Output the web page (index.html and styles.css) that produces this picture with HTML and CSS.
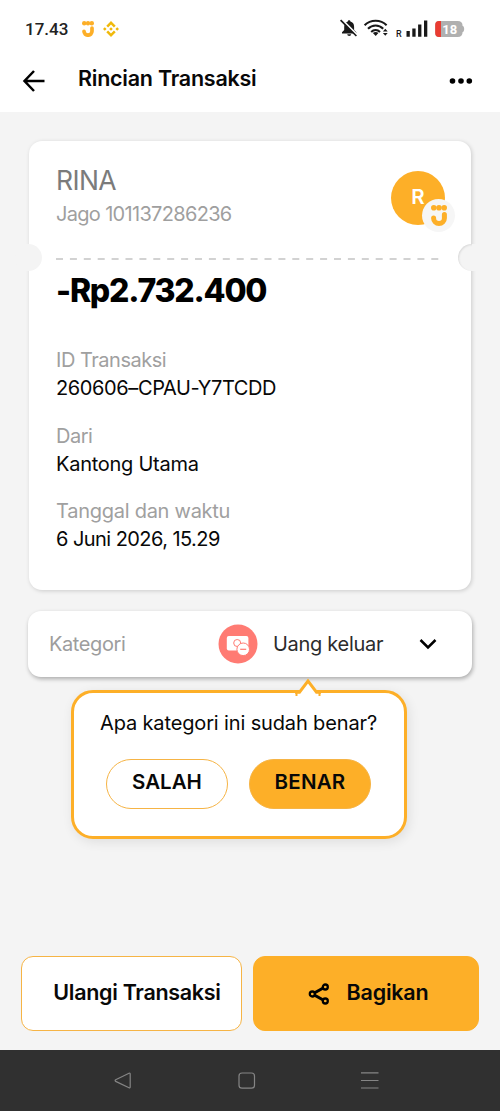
FILE: index.html
```html
<!DOCTYPE html>
<html lang="id">
<head>
<meta charset="utf-8">
<title>Rincian Transaksi</title>
<link rel="stylesheet" href="styles.css">
</head>
<body>
<div class="screen">
  <header class="top">
    <div class="status">
      <span class="clock">17.43</span>
      <svg class="st-jago" width="12" height="16" viewBox="0 0 12 16" fill="#fdaf28"><circle cx="2.200" cy="2.200" r="2.200"/><circle cx="6" cy="2.200" r="2.200"/><circle cx="9.800" cy="2.200" r="2.200"/><path d="M10 7v3.300a4 3.900 0 0 1-8 0" fill="none" stroke="#fdaf28" stroke-width="3.700" stroke-linecap="round"/></svg>
      <svg class="st-coin" width="16" height="16" viewBox="0 0 16 16" fill="#f0b90b"><path d="M8 0l4.700 4.700-1.800 1.800L8 3.600 5.100 6.500 3.300 4.700zM8 16l4.700-4.700-1.800-1.800L8 12.400 5.100 9.500l-1.800 1.800zM1.800 6.200L3.600 8 1.800 9.800 0 8zM14.200 6.200L16 8l-1.800 1.800L12.400 8zM8 6.200L9.800 8 8 9.800 6.200 8z"/></svg>
      <svg class="st-right" width="126" height="20" viewBox="0 0 126 20" fill="#191919">
        <path d="M2 14.500V13.300l2.200-2.300V7.800c0-2.800 1.600-4.700 3.600-5.300C7.800.9 10.400.9 10.400 2.500c2.400.6 3.700 2.500 3.700 5.300V11l2.200 2.300v1.200zM7.200 15.300h4a2 1.700 0 0 1-4 0z"/>
        <path d="M1.500.2L17.700 16.500" stroke="#fff" stroke-width="2"/><path d="M.6 1.200L16.400 17" stroke="#191919" stroke-width="1.700"/>
        <g fill="none" stroke="#191919" stroke-width="2.100"><path d="M24.600 6.300c6-6 16-6 22 0M28 9.700c4.300-4.300 10.900-4.300 15.200 0M31.200 12.900c2.500-2.500 6.300-2.500 8.800 0"/></g>
        <path d="M32.900 14c1.500-1.500 4-1.500 5.500 0l-2.700 2.900zM42.900 12.500l2.400-2.700 2.400 2.700zM42.900 14h4.800l-2.400 2.700z"/>
        <text class="roam" x="56" y="17.500">R</text>
        <path d="M66.500 11.900h3.300v5.900h-3.300zM72.300 9.600h3.300v8.200h-3.300zM78.100 5.400h3.300v12.400h-3.300zM84 1.400h3.300v16.400h-3.300z"/>
        <path d="M99 2h18.600q5 0 5 5h.6q2 3 0 6h-.6q0 5-5 5H99q-3.800 0-3.800-4V6q0-4 3.800-4z" fill="#b0b0b0"/><path d="M101 2h-2q-3.800 0-3.800 4v8q0 4 3.800 4h2z" fill="#ea3c32"/>
        <text class="batt" x="102.300" y="14.900">18</text>
      </svg>
    </div>
    <div class="appbar">
      <svg class="back" width="24" height="24" viewBox="0 0 24 24" fill="none" stroke="#000" stroke-width="2.500"><path d="M22.500 12H3M12 2L2.500 12 12 22"/></svg>
      <h1 class="title">Rincian Transaksi</h1>
      <svg class="more" width="24" height="6" viewBox="0 0 24 6"><circle cx="3.500" cy="3" r="2.800"/><circle cx="12" cy="3" r="2.800"/><circle cx="20.300" cy="3" r="2.800"/></svg>
    </div>
  </header>
  <main class="content">
    <section class="card">
      <i class="notch notch-l"></i><i class="notch notch-r"></i>
      <div class="payee">
        <div>
          <div class="name">RINA</div>
          <div class="acct">Jago 101137286236</div>
        </div>
        <div class="avatar">R<span class="badge"><svg width="16" height="21" viewBox="0 0 16 21" fill="#fdaf28"><circle cx="2.800" cy="2.800" r="2.800"/><circle cx="8" cy="2.800" r="2.800"/><circle cx="13.200" cy="2.800" r="2.800"/><path d="M13.400 9.500v3.700a5.400 5.200 0 0 1-10.800 0v-.1" fill="none" stroke="#fdaf28" stroke-width="5" stroke-linecap="round"/></svg></span></div>
      </div>
      <svg class="dash" width="384" height="2" viewBox="0 0 384 2"><path d="M0 1h384" stroke="#d2d2d2" stroke-width="2" stroke-dasharray="7 6.900"/></svg>
      <div class="amount">-Rp2.732.400</div>
      <dl class="rows">
        <dt class="k-id">ID Transaksi</dt><dd class="v-id">260606–CPAU-Y7TCDD</dd>
        <dt class="k-from">Dari</dt><dd class="v-from">Kantong Utama</dd>
        <dt class="k-date">Tanggal dan waktu</dt><dd class="v-date">6 Juni 2026, 15.29</dd>
      </dl>
    </section>
    <section class="category">
      <span class="cat-label">Kategori</span>
      <svg class="cat-icon" width="40" height="40" viewBox="0 0 40 40"><circle cx="20" cy="20" r="19.500" fill="#ff7b73"/><rect x="8.800" y="12" width="21.600" height="14.500" rx="2" fill="#fff"/><circle cx="19.200" cy="19" r="3.500" fill="#fff" stroke="#ff7b73"/><circle cx="25.200" cy="25.300" r="6.300" fill="#fff" stroke="#ff7b73"/><path d="M22.200 25.300h6" stroke="#ff7b73" stroke-width="1.200"/></svg>
      <span class="cat-value">Uang keluar</span>
      <svg class="chev" width="18" height="12" viewBox="0 0 18 12" fill="none" stroke="#000" stroke-width="2.500"><path d="M1.500 2L9 9.500 16.500 2"/></svg>
    </section>
    <section class="tip">
      <svg class="arrow" width="28" height="19" viewBox="0 0 28 19"><path d="M3 18v-4h3L14 3l8 11h3v4z" fill="#fff"/><path d="M1 14.200H5.500L14 3l8.500 11.200H27" fill="none" stroke="#fdaf28" stroke-width="2.900"/><path d="M1.500 15H3.500v3h-2zM24.500 15h2v3h-2z" fill="#fdaf28"/></svg>
      <p class="ask">Apa kategori ini sudah benar?</p>
      <div class="choices">
        <button class="pill">SALAH</button>
        <button class="pill solid">BENAR</button>
      </div>
    </section>
  </main>
  <footer class="actions">
    <button class="btn">Ulangi Transaksi</button>
    <button class="btn primary"><svg width="22" height="22" viewBox="0 0 22 22" fill="none" stroke="#000"><path d="M17 4L4.500 11 17 18" stroke-width="3"/><g fill="#fdaf28" stroke-width="2.300"><circle cx="17.300" cy="4" r="2.500"/><circle cx="4.300" cy="11" r="2.500"/><circle cx="17.300" cy="18" r="2.500"/></g></svg><span class="share">Bagikan</span></button>
  </footer>
  <nav class="nav">
    <svg width="500" height="61" viewBox="0 0 500 61" fill="none" stroke="#858585" stroke-width="1.200"><path d="M129 23.300q1.200-.6 1.200.8v12.800q0 1.400-1.200.8l-13.300-6.300q-1.200-.8 0-1.600z"/><rect x="239" y="23" width="15.500" height="15.200" rx="3"/><path d="M361 22.800h17.500M361 30.500h17.500M361 38h17.500"/></svg>
  </nav>
</div>
</body>
</html>
```
FILE: styles.css
```css
* { box-sizing: border-box; }
body { margin: 0; background: #f4f4f4; font-family: Inter, "Liberation Sans", sans-serif; color: #080808; }
h1, p, dl, dd { margin: 0; }
button { font: inherit; color: inherit; padding: 0; white-space: nowrap; }
.screen { width: 500px; height: 1111px; display: flex; flex-direction: column; overflow: hidden; }
.top { height: 112px; background: #fff; }
.status { height: 58px; display: flex; align-items: center; padding-left: 25px; }
.clock { width: 57px; font: 500 17px/20px Roboto, sans-serif; color: #222; }
.st-coin { margin-left: 9px; }
.st-right { margin-left: 221px; }
.roam { font: 500 9px Roboto, sans-serif; }
.batt { font: 700 13px Roboto, sans-serif; fill: #fff; }
.appbar { display: flex; align-items: center; height: 40px; padding-left: 22px; }
.title { width: 371px; margin-left: 32px; font-size: 21.5px; font-weight: 600; line-height: 39px; letter-spacing: -0.24px; }
.back { margin-top: 5px; }
.more { margin-top: 6px; }
.content { flex: 1; padding-top: 29px; }
.card { position: relative; width: 442px; height: 449px; margin-left: 29px; padding: 23px 27px 0; background: #fff; border-radius: 13px; box-shadow: 1px 1px 4px rgba(0,0,0,.17); white-space: nowrap; }
.notch { position: absolute; top: 103px; width: 27px; height: 27px; border-radius: 50%; background: #f4f4f4; }
.notch-l { left: -14px; }
.notch-r { right: -14px; box-shadow: inset 1px 1px 2px rgba(0,0,0,.1); }
.notch-r::after { content: ""; position: absolute; left: 14px; top: 0; width: 14px; height: 27px; background: #f4f4f4; }
.payee { display: flex; justify-content: space-between; height: 94px; }
.name { font-size: 26.5px; line-height: 33px; letter-spacing: -0.6px; color: #7b7b7b; }
.acct { font-size: 20px; line-height: 34px; letter-spacing: -0.68px; color: #9f9f9f; }
.avatar { position: relative; left: 1px; width: 54px; height: 54px; margin-top: 7px; border-radius: 50%; background: #fdaf28; color: #fff; font-size: 20.5px; font-weight: 600; line-height: 51px; text-align: center; }
.badge { position: absolute; left: 31px; top: 28px; width: 33px; height: 33px; border-radius: 50%; background: #f6f6f6; display: flex; align-items: center; justify-content: center; }
.dash { display: block; }
.amount { margin-top: 10px; font-size: 32px; font-weight: 800; line-height: 42px; letter-spacing: -1.2px; color: #000; }
.rows { margin-top: 34px; font-size: 20px; }
.rows dt { line-height: 28px; color: #a0a0a0; }
.rows dd { line-height: 28px; margin-bottom: 19.5px; }
.k-id { letter-spacing: -0.48px; }
.v-id { letter-spacing: -0.39px; }
.k-from { letter-spacing: -0.5px; }
.v-from { letter-spacing: -0.26px; }
.k-date { letter-spacing: -0.26px; }
.v-date { letter-spacing: -0.56px; }
.category { display: flex; align-items: center; width: 444px; height: 66px; margin: 21px 0 0 28px; padding-left: 21px; background: #fff; border-radius: 13px; box-shadow: 1px 2px 4px rgba(0,0,0,.3); font-size: 20px; white-space: nowrap; }
.cat-label { width: 169px; letter-spacing: -0.4px; color: #9d9d9d; }
.cat-value { width: 146px; margin-left: 15px; letter-spacing: -0.3px; color: #2c2c2c; }
.tip { position: relative; width: 336px; height: 149px; margin: 13px 0 0 71px; padding-top: 13px; border: 3px solid #fdaf28; border-radius: 22px; background: #fff; box-shadow: 2px 3px 12px rgba(0,0,0,.09); }
.arrow { position: absolute; left: 220px; top: -15px; }
.ask { padding-left: 26px; font-size: 20px; line-height: 34px; letter-spacing: -0.14px; white-space: nowrap; }
.choices { display: flex; gap: 21px; margin: 19px 0 0 32px; }
.pill { width: 122px; height: 50px; padding-bottom: 6px; border: 1.5px solid #f6b445; border-radius: 25px; background: #fff; font-size: 20.5px; font-weight: 600; }
.solid { background: #fdaf28; letter-spacing: 0.2px; }
.actions { display: flex; gap: 11px; height: 94px; padding-left: 21px; }
.btn { display: flex; align-items: center; justify-content: center; gap: 17px; width: 221px; height: 75px; padding: 0 0 4px 11px; border: 1.5px solid #f6b445; border-radius: 12px; background: #fff; font-size: 21.5px; font-weight: 600; letter-spacing: -0.3px; }
.primary { width: 226px; padding-left: 4px; border-color: #fdaf28; background: #fdaf28; }
.primary svg { position: relative; top: 2px; }
.share { letter-spacing: -0.2px; }
.nav { height: 61px; background: #303030; }
```
